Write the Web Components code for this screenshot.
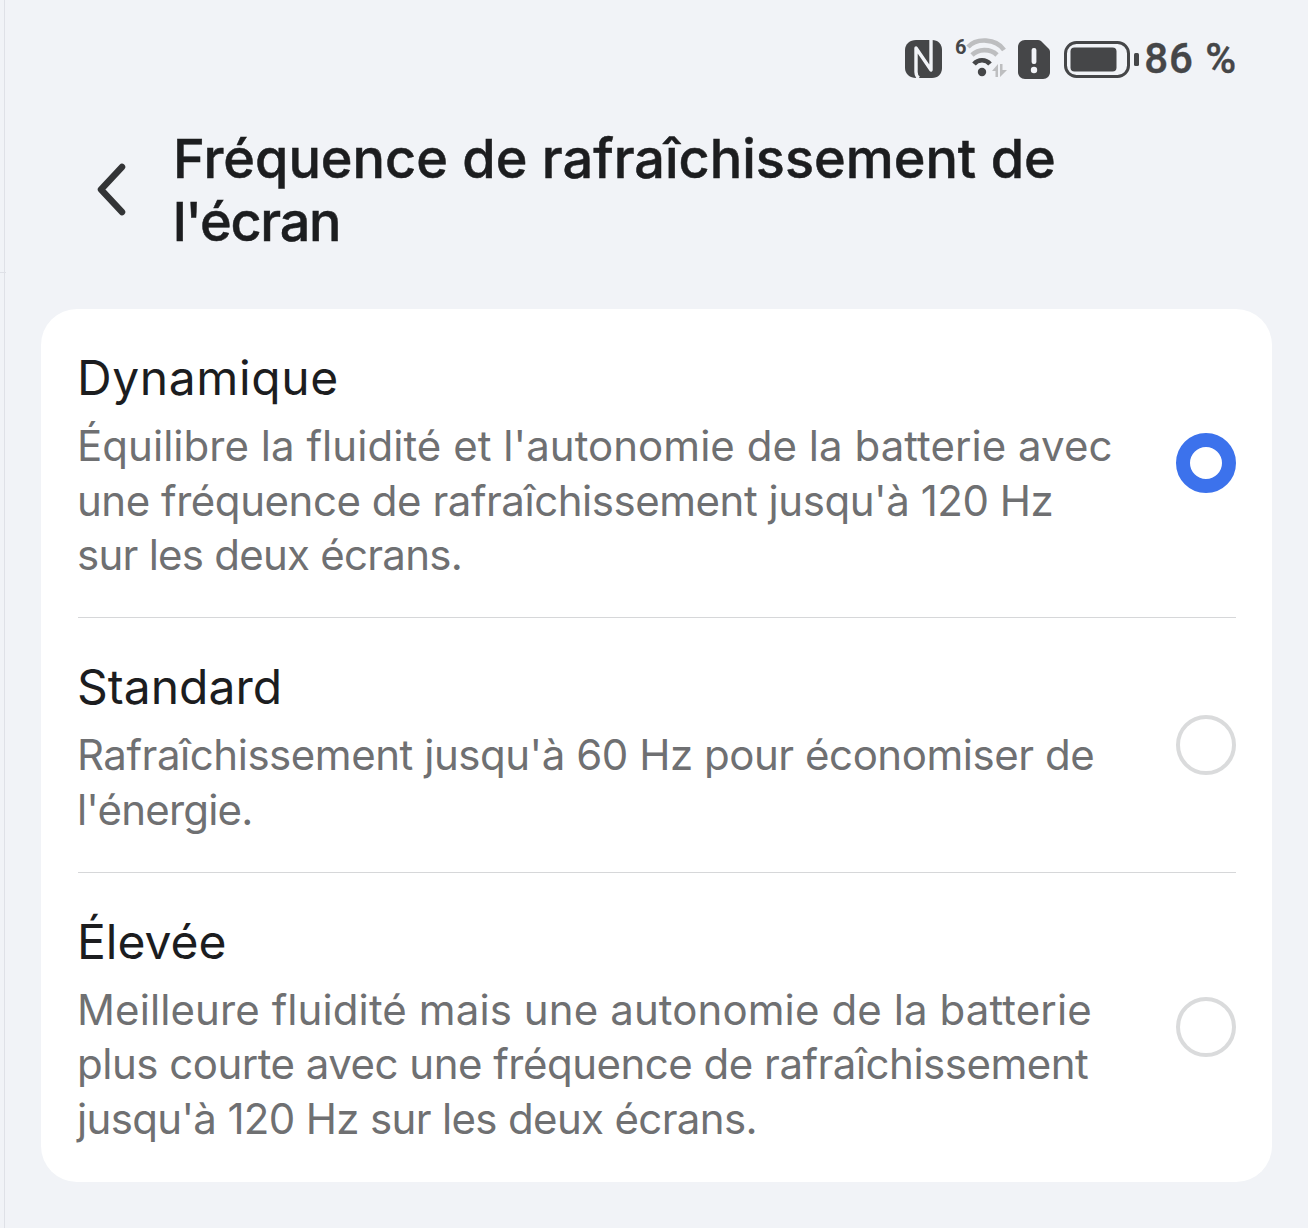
<!DOCTYPE html>
<html lang="fr">
<head>
<meta charset="utf-8">
<title>Fréquence de rafraîchissement de l'écran</title>
<style>
  html, body { margin: 0; padding: 0; background: #f1f3f7; }
  body { width: 1308px; height: 1228px; overflow: hidden; font-family: Inter, "Noto Sans", sans-serif; }
</style>
</head>
<body>
<settings-page>
  <status-bar slot="status" level="86 %"></status-bar>
  <page-header slot="header">
    <text-line>Fréquence de rafraîchissement de</text-line>
    <text-line track="-1.3">l'écran</text-line>
  </page-header>
  <option-card>
    <option-row selected>
      <text-line slot="title" track="0.6">Dynamique</text-line>
      <text-line track="0.04">Équilibre la fluidité et l'autonomie de la batterie avec</text-line>
      <text-line track="-0.46">une fréquence de rafraîchissement jusqu'à 120 Hz</text-line>
      <text-line track="-0.75">sur les deux écrans.</text-line>
    </option-row>
    <option-row>
      <text-line slot="title">Standard</text-line>
      <text-line track="-0.46">Rafraîchissement jusqu'à 60 Hz pour économiser de</text-line>
      <text-line track="-0.8">l'énergie.</text-line>
    </option-row>
    <option-row last>
      <text-line slot="title">Élevée</text-line>
      <text-line track="0.1">Meilleure fluidité mais une autonomie de la batterie</text-line>
      <text-line track="-0.5">plus courte avec une fréquence de rafraîchissement</text-line>
      <text-line track="-0.66">jusqu'à 120 Hz sur les deux écrans.</text-line>
    </option-row>
  </option-card>
</settings-page>

<script>
class SettingsPage extends HTMLElement {
  constructor() {
    super();
    this.attachShadow({ mode: 'open' }).innerHTML = `
      <style>
        :host { display: flex; flex-direction: column; position: relative; height: 1228px; box-sizing: border-box; margin-left: 4px; border-left: 1px solid #dfe1e7; padding: 0 36px 0 36px; }
        .tick { position: absolute; left: -5px; top: 272px; width: 6px; height: 1px; background: #dfe1e7; }
      </style>
      <div class="tick"></div>
      <slot name="status"></slot>
      <slot name="header"></slot>
      <slot></slot>`;
  }
}

class TextLine extends HTMLElement {
  constructor() {
    super();
    const track = this.getAttribute('track') || '0';
    this.attachShadow({ mode: 'open' }).innerHTML = `
      <style>
        :host { display: block; white-space: nowrap; letter-spacing: ${track}px; }
      </style>
      <slot></slot>`;
  }
}

class StatusBar extends HTMLElement {
  constructor() {
    super();
    const level = this.getAttribute('level') || '';
    this.attachShadow({ mode: 'open' }).innerHTML = `
      <style>
        :host { display: flex; align-items: center; justify-content: flex-end; height: 40px; margin: 39px 35px 0 0; color: #454648; }
        svg { display: block; flex: none; }
        .level { font-family: Roboto, sans-serif; font-size: 42px; font-weight: 500; line-height: 40px; margin-left: 5px; letter-spacing: .9px; -webkit-text-stroke: .4px #454648; white-space: nowrap; }
      </style>
      <svg width="38" height="38" viewBox="0 0 38 38" style="margin-right:12px">
        <path fill="#454648" d="M11 0h16c6 0 10 4 10 10v18c0 6-4 10-10 10H11C5 38 0 34 0 28V10C0 4 5 0 11 0z"/>
        <path fill="none" stroke="#f1f3f7" stroke-width="3.4" stroke-linejoin="round" d="M14 38c-2-1-3-3-3-6V8l15 22V0"/>
      </svg>
      <svg width="53" height="48" viewBox="0 -2 53 48" style="margin-right:10px">
        <text x="0" y="17" font-size="20" font-weight="700" font-family="Roboto" fill="#454648">6</text>
        <path fill="none" stroke="#bdbec0" stroke-width="4.6" d="M13 10C21 1 41 1 49 13"/>
        <path fill="none" stroke="#bdbec0" stroke-width="4.6" d="M17 18C23 12 35 11 42 18"/>
        <path fill="none" stroke="#454648" stroke-width="4.6" d="M19 27C23 22 31 22 35 27"/>
        <circle cx="27" cy="35" r="4.2" fill="#454648"/>
        <path fill="#bdbec0" d="M43 27V40H40.5V34H37ZM45 40V27H47.5V33H52Z"/>
      </svg>
      <svg width="32" height="39" viewBox="0 0 32 39" style="margin-right:14px">
        <path fill="#454648" d="M7 0h13c1 0 2 .4 3 1l8 8c.7.8 1 2 1 3v20c0 4-3 7-7 7H7c-4 0-7-3-7-7V7c0-4 3-7 7-7z"/>
        <rect x="13.6" y="8" width="4.8" height="16" rx="2" fill="#f1f3f7"/>
        <circle cx="16" cy="30" r="3.2" fill="#f1f3f7"/>
      </svg>
      <svg width="75" height="37" viewBox="0 0 75 37">
        <rect x="1.5" y="1.5" width="63" height="34" rx="11" fill="none" stroke="#454648" stroke-width="3"/>
        <rect x="6.5" y="6.5" width="46" height="24" rx="4" fill="#454648"/>
        <rect x="70" y="12" width="5" height="13" rx="1.5" fill="#454648"/>
      </svg>
      <span class="level">${level}</span>`;
  }
}

class PageHeader extends HTMLElement {
  constructor() {
    super();
    this.attachShadow({ mode: 'open' }).innerHTML = `
      <style>
        :host { display: flex; align-items: center; margin-top: 47px; height: 128px; margin-bottom: 55px; padding-left: 53px; }
        svg { display: block; flex: none; margin-right: 47px; }
        h1 { margin: 0; font-size: 54px; line-height: 63px; font-weight: 500; -webkit-text-stroke: .5px #1c1d1f; color: #1c1d1f; }
      </style>
      <svg width="32" height="56" viewBox="0 0 32 56">
        <path d="M28 5 7 27.5 28 50" fill="none" stroke="#333436" stroke-width="6.5" stroke-linecap="round" stroke-linejoin="round"/>
      </svg>
      <h1><slot></slot></h1>`;
  }
}

class OptionCard extends HTMLElement {
  constructor() {
    super();
    this.attachShadow({ mode: 'open' }).innerHTML = `
      <style>
        :host { display: block; background: #fff; border-radius: 36px; padding: 0 36px 0 37px; }
      </style>
      <slot></slot>`;
  }
}

class OptionRow extends HTMLElement {
  constructor() {
    super();
    this.attachShadow({ mode: 'open' }).innerHTML = `
      <style>
        :host { display: flex; align-items: center; justify-content: space-between; padding: 40px 0 34.5px; border-bottom: 1px solid #d6d7d9; }
        :host([last]) { border-bottom: 0; padding-bottom: 36px; }
        .text { margin-left: -1px; }
        .title { font-size: 48px; line-height: 58px; color: #1c1d1f; }
        .desc { font-size: 42px; line-height: 54.5px; color: #6f7072; margin-top: 12px; }
        .radio { flex: none; box-sizing: border-box; width: 60px; height: 60px; margin-bottom: 5px; border-radius: 50%; border: 4px solid #dadbdc; }
        :host([selected]) .radio { border: 14.5px solid #3c72ec; }
      </style>
      <div class="text">
        <div class="title"><slot name="title"></slot></div>
        <div class="desc"><slot></slot></div>
      </div>
      <div class="radio"></div>`;
  }
}

customElements.define('settings-page', SettingsPage);
customElements.define('text-line', TextLine);
customElements.define('status-bar', StatusBar);
customElements.define('page-header', PageHeader);
customElements.define('option-card', OptionCard);
customElements.define('option-row', OptionRow);
</script>
</body>
</html>
